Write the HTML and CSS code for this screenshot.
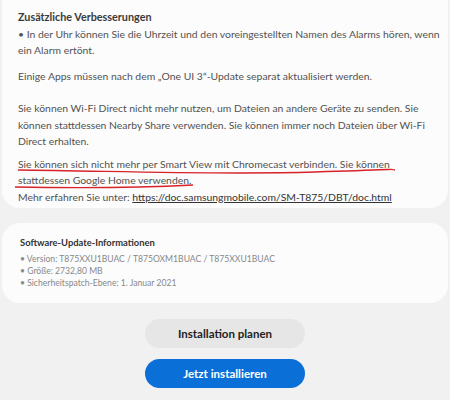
FILE: index.html
```html
<!DOCTYPE HTML>
<html>
    <head>
        <meta http-equiv="Content-Type" content="text/html; charset=UTF-8"/>
        <title>Software-Update</title>
        <link rel="stylesheet" href="styles.css">
    </head>
    <body>
        <div class="card notes">
            <div class="title">Zusätzliche Verbesserungen</div>
            <p class="p1">• In der Uhr können Sie die Uhrzeit und den voreingestellten Namen des Alarms hören, wenn ein Alarm ertönt.</p>
            <p class="p2">Einige Apps müssen nach dem „One UI 3“-Update separat aktualisiert werden.</p>
            <p class="p3">Sie können Wi-Fi Direct nicht mehr nutzen, um Dateien an andere Geräte zu senden. Sie können stattdessen Nearby Share verwenden. Sie können immer noch Dateien über Wi-Fi Direct erhalten.</p>
            <p class="marked">Sie können sich nicht mehr per Smart View mit Chromecast verbinden. Sie können stattdessen Google Home verwenden.<br>Mehr erfahren Sie unter: <a href="#">https://doc.samsungmobile.com/SM-T875/DBT/doc.html</a>
                <svg class="scribble" width="420" height="40" viewBox="0 0 420 40">
                    <path d="M3 14 C 100 15, 200 19, 300 16 S 370 13, 380 14" />
                    <path d="M0 31 C 50 32, 120 32, 178 29" />
                </svg>
            </p>
        </div>
        <div class="card info">
            <div class="info-title">Software-Update-Informationen</div>
            <ul>
                <li>• Version: T875XXU1BUAC / T875OXM1BUAC / T875XXU1BUAC</li>
                <li>• Größe: 2732,80 MB</li>
                <li>• Sicherheitspatch-Ebene: 1. Januar 2021</li>
            </ul>
        </div>
        <div class="actions">
            <button class="btn btn-gray">Installation planen</button>
            <button class="btn btn-blue">Jetzt installieren</button>
        </div>
    </body>
</html>
```

FILE: styles.css
```css
html{
    background-color:#f1f1f1;
}
body{
    margin:0;
    padding:0 2px;
    font-family:Lato, "Noto Sans", sans-serif;
    color:#525252;
}
.card{
    background:#fcfcfc;
    border-radius:0 0 18px 18px;
}
.notes{
    padding:9px 8px 3px 16px;
    font-size:10.4px;
    line-height:16.5px;
}
.notes .title{
    color:#3a3a3a;
    font-weight:700;
    font-size:10.8px;
}
.notes p{
    margin:0;
}
.notes .p1{
    margin-bottom:9px;
}
.notes .p2{
    margin-bottom:16px;
}
.notes .p3{
    margin-bottom:6px;
}
.notes p.marked{
    position:relative;
}
.notes a{
    color:#333;
    text-decoration:underline;
}
.scribble{
    position:absolute;
    left:-3px;
    top:0;
    fill:none;
    stroke:#d8232a;
    stroke-width:1.4;
}
.info{
    margin-top:15px;
    border-radius:18px;
    padding:14px 18px 14px;
}
.info-title{
    font-size:9.4px;
    font-weight:700;
    color:#333;
    margin-bottom:5px;
}
.info ul{
    list-style:none;
    margin:0;
    padding:0;
    font-size:8.6px;
    line-height:12px;
    color:#888;
}
.actions{
    display:flex;
    flex-direction:column;
    align-items:center;
    gap:11px;
    margin-top:16px;
}
.btn{
    width:160px;
    height:29px;
    border:0;
    border-radius:15px;
    font-family:Lato, "Noto Sans", sans-serif;
    font-size:11.5px;
    font-weight:700;
}
.btn-gray{
    background:#e6e6e6;
    color:#222;
}
.btn-blue{
    background:#0b6fd8;
    color:#fff;
}
```
